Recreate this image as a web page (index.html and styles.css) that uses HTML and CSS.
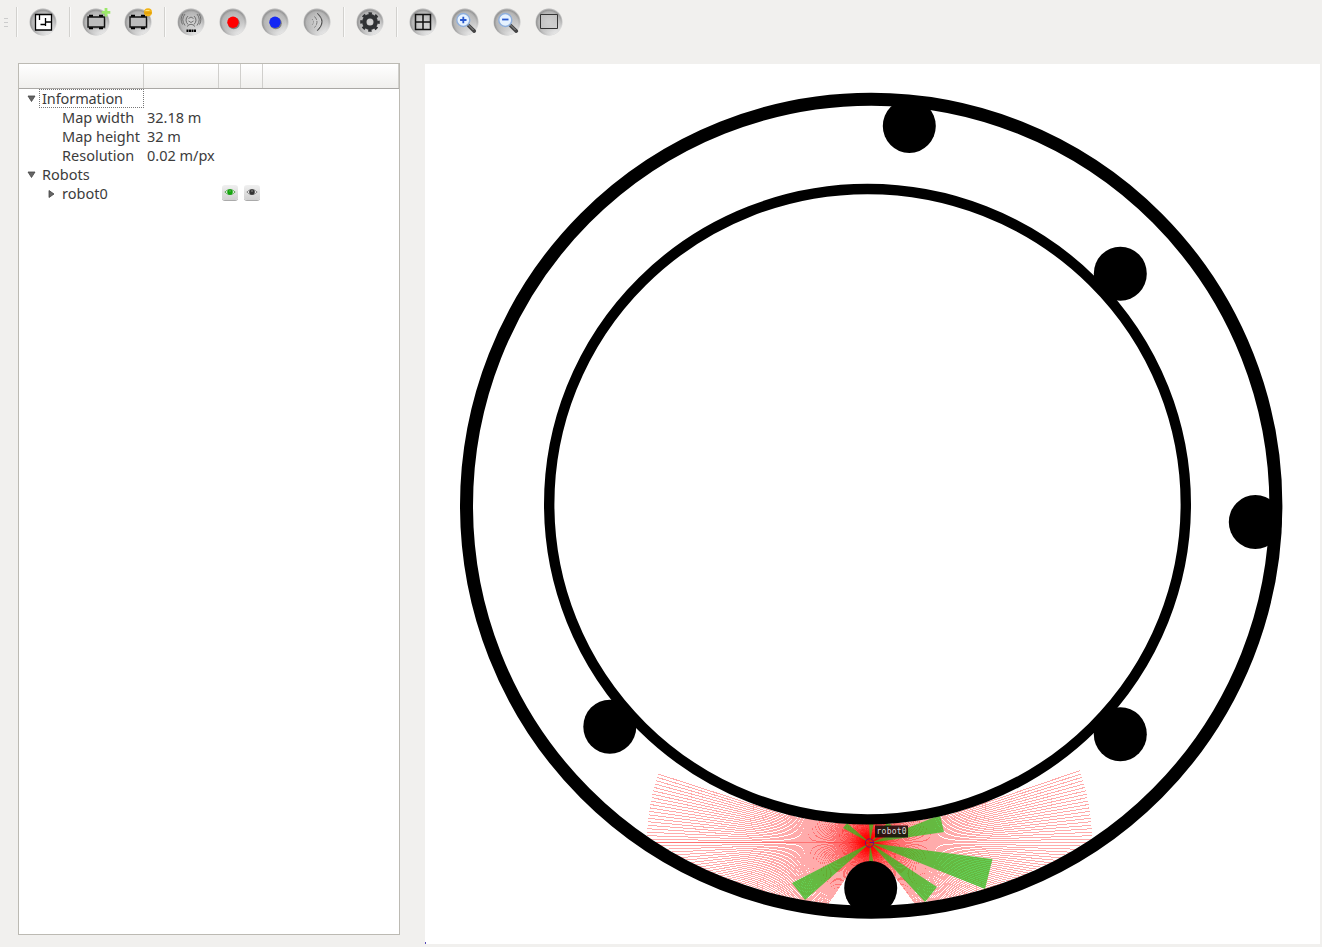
FILE: index.html
```html
<!DOCTYPE html>
<html lang="en">
<head>
<meta charset="utf-8">
<title>Robot simulator</title>
<link rel="stylesheet" href="styles.css">
</head>
<body>
<svg class="defs" width="0" height="0" aria-hidden="true">
  <defs>
    <radialGradient id="disc" cx=".5" cy=".52" r=".5">
      <stop offset="0" stop-color="#d8d8d8"/><stop offset=".45" stop-color="#c2c2c2"/><stop offset=".78" stop-color="#b6b6b6"/><stop offset=".92" stop-color="#969696"/><stop offset="1" stop-color="#c0c0c0"/>
    </radialGradient>
    <linearGradient id="shine" x1="0" y1="0" x2=".6" y2="1">
      <stop offset="0" stop-color="#777" stop-opacity=".3"/><stop offset=".5" stop-color="#bbb" stop-opacity="0"/><stop offset="1" stop-color="#fff" stop-opacity=".75"/>
    </linearGradient>
    <symbol id="base" viewBox="0 0 28 28"><circle cx="14" cy="14" r="13.5" fill="url(#disc)"/><circle cx="14" cy="14" r="13.5" fill="url(#shine)"/></symbol>
    <symbol id="bot" viewBox="0 0 28 28"><path d="M6.500 11h17v10h-17z" fill="#555" opacity=".3"/><path d="M6 9h16.500v10H6z" fill="#bcbcbc" stroke="#111" stroke-width="1.400"/><path d="M7 7.700h4M17 7.700h4M7 20.200h4M17 20.200h4" stroke="#000" stroke-width="1.900"/></symbol>
    <symbol id="lens" viewBox="0 0 28 28"><path d="M17.500 17.500l5.800 5.600" stroke="#444" stroke-width="3.600" stroke-linecap="round"/><path d="M17.500 17l5 5" stroke="#999"/><circle cx="12.300" cy="12" r="6.500" fill="#e6f2ff" stroke="#8fafdc" stroke-width="1.400"/></symbol>
  </defs>
</svg>
<main class="window">
  <header class="toolbar">
    <i class="grip"></i><i class="separator first"></i>
    <svg class="tool" viewBox="0 0 28 28"><use href="#base"/><path d="M6.500 6.500h16v15.500h-16zM10.500 6.500v5.500M16.500 10v8M16.500 14h6M11.500 16.500h5" fill="#fff" stroke="#000" stroke-width="1.300"/></svg>
    <i class="separator"></i>
    <svg class="tool" viewBox="0 0 28 28"><use href="#base"/><use href="#bot"/><path d="M24 0v8.600M19.700 4.300h8.600" stroke="#9be869" stroke-width="2.800"/></svg>
    <svg class="tool" viewBox="0 0 28 28"><use href="#base"/><use href="#bot"/><circle cx="24" cy="4.200" r="4" fill="#f2b315"/><path d="M20.300 5h7.400" stroke="#d08a00" stroke-width=".8"/><path d="M21.500 2.500h4" stroke="#ffe276"/></svg>
    <i class="separator"></i>
    <svg class="tool" viewBox="0 0 28 28"><use href="#base"/><g fill="none" stroke="#666" stroke-width=".9"><path d="M11.500 10.500q2.500-3 5 0M11.500 13q2.500 3 5 0M11 16.500q-4-4.500 0-8.500M17 16.500q4-4.500 0-8.500M8 17.500Q3.500 11.500 8 6M20 17.500q4.500-6 0-11.500M5.500 16.500Q2.500 11 6 6M22.500 16.500q3-5.500-.5-10.500M10 18.500q4-4.500 8 0"/></g><path d="M9.500 22.800h9.500" stroke="#000" stroke-width="2.600" stroke-dasharray="2 .5"/></svg>
    <svg class="tool" viewBox="0 0 28 28"><use href="#base"/><circle cx="14.800" cy="15.300" r="6" fill="#555" opacity=".65"/><circle cx="14" cy="14.300" r="5.700" fill="#f00"/></svg>
    <svg class="tool" viewBox="0 0 28 28"><use href="#base"/><circle cx="14.800" cy="15.300" r="6" fill="#555" opacity=".65"/><circle cx="14" cy="14.300" r="5.700" fill="#1428f4"/></svg>
    <svg class="tool" viewBox="0 0 28 28"><use href="#base"/><g fill="none" stroke="#777"><path d="M9 11q3 3 0 6" stroke-dasharray="1 1"/><path d="M11.500 8.500q5 5.500 0 11" stroke-dasharray="4 1"/><path d="M14 5.500q9.500 8 0 17" stroke="#555" stroke-width="1.600"/><path d="M13.200 5.500q9.500 8 0 17" stroke="#ddd"/></g></svg>
    <i class="separator"></i>
    <svg class="tool" viewBox="0 0 28 28"><use href="#base"/><circle cx="14" cy="14" r="5.700" fill="none" stroke="#303234" stroke-width="4.400"/><circle cx="14" cy="14" r="8.500" fill="none" stroke="#303234" stroke-width="2.600" stroke-dasharray="3.400 3.276" stroke-dashoffset="1.700"/></svg>
    <i class="separator"></i>
    <svg class="tool" viewBox="0 0 28 28"><use href="#base"/><path d="M6.500 6.500h15v15h-15zM14 6.500v15M6.500 14h15" fill="none" stroke="#111" stroke-width="1.500"/></svg>
    <svg class="tool" viewBox="0 0 28 28"><use href="#base"/><use href="#lens"/><path d="M12.300 8.800v6.400M9.100 12h6.400" stroke="#2858ce" stroke-width="1.800"/></svg>
    <svg class="tool" viewBox="0 0 28 28"><use href="#base"/><use href="#lens"/><path d="M9.100 11.500h6.400" stroke="#2858ce" stroke-width="1.800"/></svg>
    <svg class="tool" viewBox="0 0 28 28"><use href="#base"/><path d="M5.500 6.500h17v14h-17z" fill="#ccc" fill-opacity=".5" stroke="#333"/></svg>
  </header>
  <div class="workspace">
    <aside class="tree">
      <div class="columns"><i></i><i></i><i></i><i></i><i></i></div>
      <div class="row"><svg class="arrow" viewBox="0 0 9 8"><path d="M1 1h7L4.500 6.500z"/></svg><span class="label focused">Information</span></div>
      <div class="row child"><span class="key">Map width</span><span>32.18 m</span></div>
      <div class="row child"><span class="key">Map height</span><span>32 m</span></div>
      <div class="row child"><span class="key">Resolution</span><span>0.02 m/px</span></div>
      <div class="row"><svg class="arrow" viewBox="0 0 9 8"><path d="M1 1h7L4.500 6.500z"/></svg><span class="label">Robots</span></div>
      <div class="row robot"><svg class="arrow" viewBox="0 0 9 8"><path d="M2 .5v7L7 4z"/></svg><span class="name">robot0</span>
        <svg class="eye green" viewBox="0 0 16 16"><path d="M2.500 7.500Q8 2 13.500 7.500Q8 13 2.500 7.500z" fill="#fff"/><circle class="pupil" cx="8" cy="7.500" r="3"/><circle cx="8" cy="6.300" r=".8" fill="#fff" opacity=".6"/></svg>
        <svg class="eye" viewBox="0 0 16 16"><path d="M2.500 7.500Q8 2 13.500 7.500Q8 13 2.500 7.500z" fill="#fff"/><circle class="pupil" cx="8" cy="7.500" r="3"/><circle cx="8" cy="6.300" r=".8" fill="#fff" opacity=".6"/></svg>
      </div>
    </aside>
    <svg class="map" viewBox="425 64 895 880">
      <g id="rays" class="rays"></g>
      <g class="sonar">
        <path d="M870 843L843 828L847 823zM870 843L869 824H873.500zM870 843L887 823L892 825zM870 843L940 815L944 832zM870 843L992.500 859L985 889zM870 843L937 887L925 902zM870 843L805 900L792 883zM870 843L869 863H873.500z"/>
      </g>
      <ellipse class="outer" cx="871.200" cy="505.700" rx="404.700" ry="406.500"/>
      <ellipse class="inner" cx="867.500" cy="504.200" rx="318.300" ry="315.200"/>
      <g><ellipse cx="909.300" cy="126" rx="26.500" ry="27"/><ellipse cx="1120.300" cy="273.700" rx="26.500" ry="27"/><ellipse cx="1255.300" cy="522" rx="26.500" ry="27"/><ellipse cx="1120.300" cy="734.200" rx="26.500" ry="27"/><ellipse cx="609.800" cy="726.700" rx="26.500" ry="27"/><ellipse cx="870.700" cy="888" rx="26.500" ry="27"/></g>
      <path d="M869.500 842.500h4.500" stroke="#5b0794"/><circle cx="869.500" cy="843" r="4.200" fill="none" stroke="#7b087c"/>
      <rect x="875" y="825.500" width="33" height="12" fill="#180b0b" fill-opacity=".88"/>
      <text x="876.500" y="834">robot0</text>
      <path d="M425 942h1v2h-1z" fill="#5548b8"/>
    </svg>
  </div>
</main>
<script src="rays.js"></script>
</body>
</html>
```
FILE: styles.css
```css
* { box-sizing: border-box; }
body { margin: 0; background: #f1f0ee; color: #3c3c3c; font: 14.5px/19px "Noto Sans", "Open Sans", sans-serif; }
.defs { position: absolute; }
.window { width: 1322px; height: 947px; overflow: hidden; }
.toolbar { height: 64px; display: flex; align-items: flex-start; gap: 14px; padding: 8px 0 0 4px; }
.tool { width: 28px; height: 28px; flex: none; overflow: visible; }
.separator { width: 2px; height: 30px; margin: -1px -2.500px 0 -2.500px; border-left: 1px solid #d2d1ce; border-right: 1px solid #fafaf9; flex: none; }
.separator.first { margin-left: -6px; margin-right: -3px; }
.grip { width: 4px; height: 9px; margin-top: 10px; background: repeating-linear-gradient(#ccc 0 1px, transparent 1px 4px); }
.workspace { display: flex; align-items: flex-start; padding-left: 18px; gap: 25px; }
.tree { width: 382px; height: 872px; margin-top: -1px; border: 1px solid #bcbab3; background: #fff; flex: none; }
.columns { display: grid; grid-template-columns: 125px 75px 22px 22px 1fr; height: 25px; background: linear-gradient(#fff, #f0efed); border-bottom: 1px solid #aaa8a5; }
.columns i { border-right: 1px solid #d0cfcc; }
.row { height: 19px; display: flex; align-items: center; padding-left: 8px; white-space: nowrap; }
.child { padding-left: 43px; }
.key { width: 85px; flex: none; }
.arrow { width: 9px; height: 8px; fill: #666; stroke: #444; stroke-width: .8; margin-right: 3px; flex: none; }
.label { height: 19px; padding-left: 3px; }
.label.focused { width: 105px; outline: 1px dotted #777; outline-offset: -1px; letter-spacing: -.1px; }
.robot { padding-left: 28px; }
.name { width: 160px; margin-left: 3px; }
.eye { width: 16px; height: 15px; margin-right: 6px; margin-top: -2px; border-radius: 3px; background: linear-gradient(#f0f0f0, #d0d0d0); box-shadow: 0 1px #aaa; flex: none; stroke: #777; stroke-width: .9; overflow: visible; }
.pupil { fill: #333; stroke: none; }
.green { stroke: #4a9b43; }
.green .pupil { fill: #13a60c; }
.map { width: 895px; height: 880px; background: #fff; flex: none; }
.map text { font: 8px "DejaVu Sans Mono", "Liberation Mono", monospace; letter-spacing: .25px; fill: #ddd; }
.outer { fill: none; stroke: #000; stroke-width: 13; }
.inner { fill: none; stroke: #000; stroke-width: 10.400; }
.rays { stroke: #f00; stroke-opacity: .33; stroke-width: 1; shape-rendering: crispEdges; }
.sonar { fill: #32be1e; fill-opacity: .75; }
```
FILE: rays.js
```js
// Laser fan: each beam stops at the first wall, obstacle or maximum range.
const origin = { x: 869.5, y: 842.7 };
const range = 222.5;
const walls = [[871, 505.7, 404, 406], [867.5, 504, 323.5, 320.3], [870.5, 888, 26, 26.5]];
let beams = "";
function hit(a, [cx, cy, rx, ry]) {
  const dx = Math.cos(a) / rx, dy = Math.sin(a) / ry;
  const ox = (origin.x - cx) / rx, oy = (origin.y - cy) / ry;
  const A = dx * dx + dy * dy, B = ox * dx + oy * dy, C = ox * ox + oy * oy - 1;
  const D = B * B - A * C;
  if (D < 0) return Infinity;
  const near = (-B - Math.sqrt(D)) / A, far = (-B + Math.sqrt(D)) / A;
  return near > 0 ? near : far > 0 ? far : Infinity;
}
// The sweep starts and ends facing backwards, so that beam is drawn twice.
const count = 400;
for (let i = 0; i <= count; i++) {
  const a = (i / count * 2 - 1) * Math.PI;
  const d = Math.min(range, ...walls.map(w => hit(a, w)));
  beams += `<line x1="${origin.x}" y1="${origin.y}" x2="${origin.x + d * Math.cos(a)}" y2="${origin.y + d * Math.sin(a)}"/>`;
}
document.getElementById("rays").innerHTML = beams;
```
